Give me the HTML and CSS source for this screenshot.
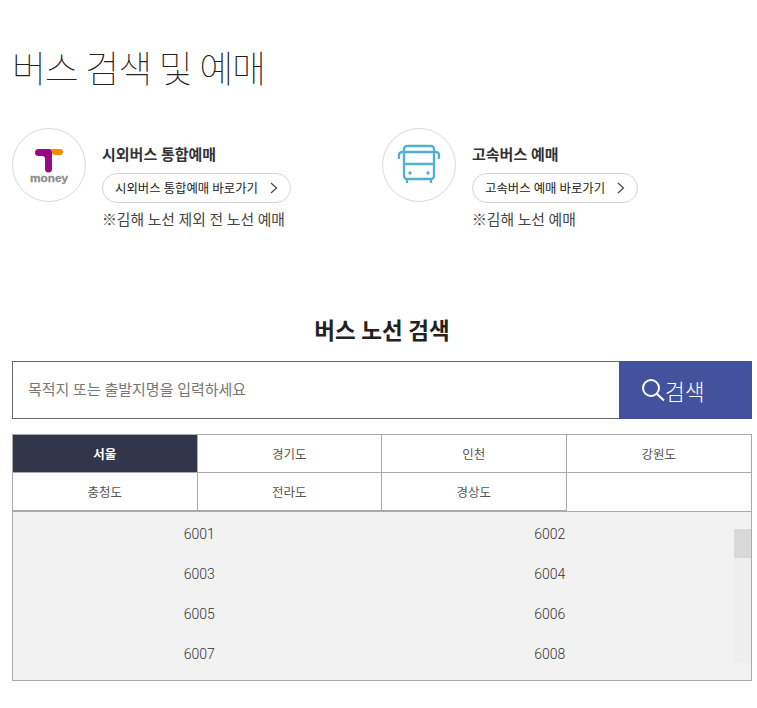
FILE: index.html
```html
<!DOCTYPE html>
<html lang="ko">
<head>
  <meta charset="UTF-8">
  <meta name="viewport" content="width=device-width, initial-scale=1.0">
  <title>버스 검색 및 예매</title>
  <link rel="stylesheet" href="styles.css">
</head>
<body>
  <h1 class="page-title">버스 검색 및 예매</h1>

  <div class="services">
    <div class="service">
      <div class="service-icon">
        <svg width="38" height="42" viewBox="0 0 38 42">
          <path d="M8 5H19A3 3 0 0 1 22 8V25A3.5 3.5 0 0 1 15 25V15Q15 12 12 12H8.5A3.5 3.5 0 0 1 8.5 5Z" fill="#940b85"/>
          <path d="M21 5H30A3 3 0 0 1 30 11H25Q22 11 22 8Q22 6 21 5Z" fill="#f48a00"/>
          <text x="19" y="37.5" class="money-text" text-anchor="middle">money</text>
        </svg>
      </div>
      <div class="service-body">
        <strong class="service-name">시외버스 통합예매</strong>
        <a href="#" class="service-link">시외버스 통합예매 바로가기
          <svg width="8" height="12" viewBox="0 0 8 12"><path d="M1 1L6.5 6L1 11" fill="none" stroke="#444" stroke-width="1.2"/></svg>
        </a>
        <p class="service-note">※김해 노선 제외 전 노선 예매</p>
      </div>
    </div>
    <div class="service">
      <div class="service-icon">
        <svg width="44" height="42" viewBox="0 0 44 42" fill="none" stroke="#4fb0cf" stroke-width="2.3">
          <rect x="7" y="2" width="30" height="33" rx="3"/>
          <path d="M7 8H37M7 20H37M10 35V39M34 35V39"/>
          <path d="M7 8H5A3 3 0 0 0 2 11V15M37 8H39A3 3 0 0 1 42 11V15"/>
          <circle cx="13" cy="29" r="1.7" fill="#4fb0cf" stroke="none"/>
          <circle cx="31" cy="29" r="1.7" fill="#4fb0cf" stroke="none"/>
        </svg>
      </div>
      <div class="service-body">
        <strong class="service-name">고속버스 예매</strong>
        <a href="#" class="service-link">고속버스 예매 바로가기
          <svg width="8" height="12" viewBox="0 0 8 12"><path d="M1 1L6.5 6L1 11" fill="none" stroke="#444" stroke-width="1.2"/></svg>
        </a>
        <p class="service-note">※김해 노선 예매</p>
      </div>
    </div>
  </div>

  <h2 class="search-title">버스 노선 검색</h2>

  <form class="search-form">
    <input type="text" class="search-input" placeholder="목적지 또는 출발지명을 입력하세요">
    <button type="button" class="search-button">
      <svg width="23" height="23" viewBox="0 0 23 23" fill="none" stroke="#fff" stroke-width="2"><circle cx="9" cy="9" r="8"/><path d="M15 15L22 21.5"/></svg>
      <span>검색</span>
    </button>
  </form>

  <div class="tabs">
    <a href="#" class="tab tab-active">서울</a>
    <a href="#" class="tab">경기도</a>
    <a href="#" class="tab">인천</a>
    <a href="#" class="tab">강원도</a>
    <a href="#" class="tab">충청도</a>
    <a href="#" class="tab">전라도</a>
    <a href="#" class="tab">경상도</a>
  </div>

  <div class="route-box">
    <ul class="route-list">
      <li>6001</li>
      <li>6002</li>
      <li>6003</li>
      <li>6004</li>
      <li>6005</li>
      <li>6006</li>
      <li>6007</li>
      <li>6008</li>
    </ul>
    <div class="scroll-track"><div class="scroll-thumb"></div></div>
  </div>
</body>
</html>
```

FILE: styles.css
```css
body {
  margin: 0;
  padding: 0 5px 27px 12px;
  background-color: #fff;
  color: #333;
  font-family: Roboto, "Noto Sans CJK KR", sans-serif;
}

.page-title {
  box-sizing: border-box;
  height: 128px;
  margin: 0;
  padding-top: 47px;
  font-size: 37px;
  font-weight: 100;
  line-height: 48px;
  letter-spacing: -1.2px;
  color: #222;
}

.services {
  display: flex;
}

.service {
  display: flex;
  width: 370px;
  gap: 16px;
}

.service-icon {
  display: flex;
  align-items: center;
  justify-content: center;
  width: 74px;
  height: 74px;
  border: 1px solid #d9d9d9;
  border-radius: 50%;
  box-sizing: border-box;
}

.money-text {
  font-family: "Liberation Sans", sans-serif;
  font-size: 11.8px;
  font-weight: bold;
  fill: #8b8b8b;
  stroke: #8b8b8b;
  stroke-width: 0.3;
}

.service-body {
  display: flex;
  flex-direction: column;
  align-items: flex-start;
  padding-top: 17px;
}

.service-name {
  font-size: 15px;
  line-height: 20px;
  color: #333;
}

.service-link {
  display: flex;
  align-items: center;
  gap: 12px;
  height: 30px;
  margin-top: 8px;
  padding: 0 12px 0 12px;
  box-sizing: border-box;
  border: 1px solid #d4d4d4;
  border-radius: 15px;
  font-size: 12.4px;
  color: #222;
  text-decoration: none;
}

.service-note {
  margin: 7px 0 0;
  font-size: 14.8px;
  line-height: 20px;
  color: #444;
}

.search-title {
  margin: 0;
  padding-top: 86px;
  font-size: 22.5px;
  line-height: 30px;
  text-align: center;
  color: #222;
}

.search-form {
  display: flex;
  height: 58px;
  margin-top: 15px;
}

.search-input {
  flex: 1;
  min-width: 0;
  padding: 0 15px;
  border: 1px solid #666;
  border-right: none;
  border-radius: 0;
  outline: none;
  font-family: Roboto, "Noto Sans CJK KR", sans-serif;
  font-size: 15px;
}

.search-input::placeholder {
  color: #777;
}

.search-button {
  display: flex;
  align-items: center;
  width: 133px;
  padding: 0 0 0 23px;
  border: none;
  background-color: #43529d;
  color: #fff;
  font-family: Roboto, "Noto Sans CJK KR", sans-serif;
  font-size: 21.5px;
  font-weight: 300;
}

.tabs {
  display: grid;
  grid-template-columns: repeat(4, 1fr);
  margin-top: 15px;
  border-top: 1px solid #aaa;
  border-left: 1px solid #aaa;
  border-right: 1px solid #aaa;
}

.tab {
  display: flex;
  align-items: center;
  justify-content: center;
  box-sizing: border-box;
  height: 38px;
  padding-bottom: 1px;
  border-right: 1px solid #aaa;
  border-bottom: 1px solid #aaa;
  font-size: 12.5px;
  color: #555;
  text-decoration: none;
}

.tab:nth-child(4) {
  border-right: none;
}

.tab-active {
  background-color: #32364a;
  color: #fff;
  font-weight: bold;
}

.route-box {
  position: relative;
  height: 170px;
  box-sizing: border-box;
  border: 1px solid #aaa;
  background-color: #f2f2f2;
}

.route-list {
  display: grid;
  grid-template-columns: 1fr 1fr;
  grid-auto-rows: 40px;
  margin: 0;
  padding: 2px 26px 0 11px;
  list-style: none;
  font-size: 14px;
  font-weight: 300;
  color: #333;
}

.route-list li {
  line-height: 40px;
  text-align: center;
}

.scroll-track {
  position: absolute;
  top: 17px;
  right: 0;
  width: 17px;
  height: 134px;
  background-color: #eee;
}

.scroll-thumb {
  height: 29px;
  background-color: #d8d8d8;
}
```
